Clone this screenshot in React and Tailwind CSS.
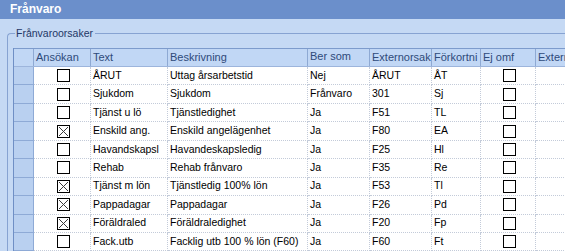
import React from "react";

const rows = [
  [false, "ÅRUT", "Uttag årsarbetstid", "Nej", "ÅRUT", "ÅT"],
  [false, "Sjukdom", "Sjukdom", "Frånvaro", "301", "Sj"],
  [false, "Tjänst u lö", "Tjänstledighet", "Ja", "F51", "TL"],
  [true, "Enskild ang.", "Enskild angelägenhet", "Ja", "F80", "EA"],
  [false, "Havandskapsl", "Havandeskapsledig", "Ja", "F25", "Hl"],
  [false, "Rehab", "Rehab frånvaro", "Ja", "F35", "Re"],
  [true, "Tjänst m lön", "Tjänstledig 100% lön", "Ja", "F53", "Tl"],
  [true, "Pappadagar", "Pappadagar", "Ja", "F26", "Pd"],
  [true, "Föräldraled", "Föräldraledighet", "Ja", "F20", "Fp"],
  [false, "Fack.utb", "Facklig utb 100 % lön (F60)", "Ja", "F60", "Ft"],
  [false, "", "", "", "", ""],
];

function Box({ checked }) {
  return (
    <span className="relative inline-block w-[13px] h-[13px] border border-black bg-white">
      {checked && (
        <svg className="absolute left-0 top-0" width="11" height="11" viewBox="0 0 11 11">
          <path d="M1 1L10 10M10 1L1 10" stroke="#3a3a3a" strokeWidth="1" fill="none" />
        </svg>
      )}
    </span>
  );
}

const hd = "h-full border-r border-[#8ea9d3] pl-[2px] flex items-center whitespace-nowrap overflow-hidden shrink-0";
const bd = "h-full border-r border-dotted border-[#c3cbd9] pl-[2px] flex items-center whitespace-nowrap overflow-hidden shrink-0";

export default function App() {
  return (
    <div className="w-[565px] h-[251px] overflow-hidden bg-[#c5d9f4] font-['Liberation_Sans',Arial,sans-serif]">
      <div className="h-[19px] bg-[#6b8fcb] text-white font-bold text-[12px] leading-[19px] pl-[10px]">
        Frånvaro
      </div>
      <fieldset className="ml-[7px] mt-[8px] border-t border-l border-[#87a3d2] rounded-tl-[4px] pl-[5px] pt-[8px] min-w-0">
        <legend className="ml-[2px] pl-[1px] pr-[2px] text-[10.5px] leading-[13px] text-[#1e3766]">
          Frånvaroorsaker
        </legend>
        <div className="w-[600px] border-l border-[#6f8fc5]">
          <div className="flex h-[19px] border-t border-b border-t-[#7d9bcc] border-b-[#9db5dc] bg-[#c1d7f5] text-[11px] text-[#2e4a7a]">
            <div className={hd + " w-[20px]"}></div>
            <div className={hd + " w-[57px]"}>Ansökan</div>
            <div className={hd + " w-[77px]"}>Text</div>
            <div className={hd + " w-[140px]"}>Beskrivning</div>
            <div className="h-full w-[62px] border-r border-[#8ea9d3] pl-[2px] pt-[1px] leading-[13.5px] overflow-hidden shrink-0">
              Ber som sjuktid
            </div>
            <div className={hd + " w-[62px]"}>Externorsak</div>
            <div className={hd + " w-[49px]"}>Förkortni</div>
            <div className={hd + " w-[55px]"}>Ej omf</div>
            <div className={hd + " w-[70px]"}>Externt</div>
          </div>
          {rows.map((r, i) => (
            <div key={i} className="flex h-[18.45px] bg-white text-[10.5px] text-black">
              <div className="h-full w-[20px] shrink-0 bg-[#b9d0f0] border-r border-b border-[#8eaad6]"></div>
              <div className={bd + " w-[57px] justify-center border-b"}>
                {r[1] !== "" && <Box checked={r[0]} />}
              </div>
              <div className={bd + " w-[77px] border-b"}>{r[1]}</div>
              <div className={bd + " w-[140px] border-b"}>{r[2]}</div>
              <div className={bd + " w-[62px] border-b"}>{r[3]}</div>
              <div className={bd + " w-[62px] border-b"}>{r[4]}</div>
              <div className={bd + " w-[49px] border-b"}>{r[5]}</div>
              <div className={bd + " w-[55px] justify-center border-b"}>
                {r[1] !== "" && <Box checked={false} />}
              </div>
              <div className={bd + " w-[70px] border-b"}></div>
            </div>
          ))}
        </div>
      </fieldset>
    </div>
  );
}
